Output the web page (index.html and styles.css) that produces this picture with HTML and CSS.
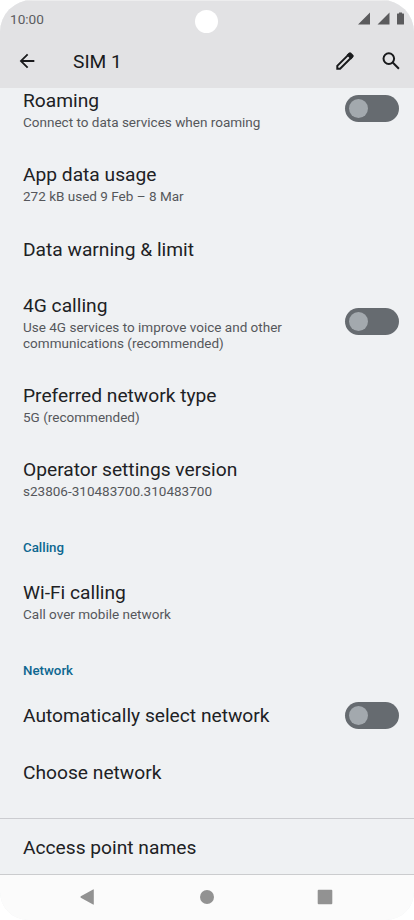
FILE: index.html
```html
<!DOCTYPE html>
<html lang="en">
<head>
<meta charset="utf-8">
<title>SIM 1</title>
<link rel="stylesheet" href="styles.css">
</head>
<body>
<div class="screen">
  <header class="top">
    <div class="status">
      <span class="clock">10:00</span>
      <svg class="signals" viewBox="0 0 48 14" width="48" height="14">
        <path d="M13 .5v12H1zM32.500.5v12h-12z"/>
        <path d="M40.500 1.500h1.500V.5h3v1h1.500q.5 0 .5.5v10q0 .5-.5.5h-6q-.5 0-.5-.5v-10q0-.5.500-.5z"/>
      </svg>
    </div>
    <div class="camera"></div>
    <div class="appbar">
      <svg class="back" viewBox="0 0 24 24" width="22" height="22"><path d="M20 11H7.830l5.590-5.590L12 4l-8 8 8 8 1.410-1.410L7.830 13H20v-2z"/></svg>
      <h1>SIM 1</h1>
      <svg class="edit" viewBox="0 0 20 20" width="20" height="20"><path class="line" d="M2.300 14.900v2.800h2.800L16.400 6.400l-2.800-2.800z"/><path d="M11.600 4l2.300-2.300q1.100-1.100 2.200 0l2.200 2.200q1.100 1.100 0 2.200L16 8.400z"/></svg>
      <svg class="search" viewBox="0 0 20 20" width="20" height="20"><circle class="line" cx="7.800" cy="7.600" r="5.300"/><path class="line" d="M11.700 11.500l6.200 6.200"/></svg>
    </div>
  </header>
  <main class="list">
    <div class="row first"><div><h2>Roaming</h2><p>Connect to data services when roaming</p></div><span class="switch"></span></div>
    <div class="row"><div><h2>App data usage</h2><p>272 kB used 9 Feb – 8 Mar</p></div></div>
    <div class="row"><div><h2>Data warning &amp; limit</h2></div></div>
    <div class="row"><div><h2>4G calling</h2><p>Use 4G services to improve voice and other<br>communications (recommended)</p></div><span class="switch"></span></div>
    <div class="row"><div><h2>Preferred network type</h2><p>5G (recommended)</p></div></div>
    <div class="row"><div><h2>Operator settings version</h2><p>s23806-310483700.310483700</p></div></div>
    <h3>Calling</h3>
    <div class="row"><div><h2>Wi-Fi calling</h2><p>Call over mobile network</p></div></div>
    <h3>Network</h3>
    <div class="row"><div><h2>Automatically select network</h2></div><span class="switch"></span></div>
    <div class="row"><div><h2>Choose network</h2></div></div>
    <div class="row last"><div><h2>Access point names</h2></div></div>
  </main>
  <nav class="nav">
    <svg viewBox="0 0 16 16" width="16" height="16"><path d="M13.800.7v14.600q0 .7-.7.300L.8 8.700Q0 8 .8 7.300L13.100.4q.7-.4.700.3z"/></svg>
    <svg viewBox="0 0 16 16" width="16" height="16"><circle cx="8" cy="8" r="7"/></svg>
    <svg viewBox="0 0 16 16" width="16" height="16"><rect x=".7" y=".7" width="14.600" height="14.600" rx="1"/></svg>
  </nav>
</div>
</body>
</html>
```
FILE: styles.css
```css
* { box-sizing: border-box; margin: 0; padding: 0; }
body { background: #fff; font-family: Roboto, sans-serif; }
svg { display: block; flex: none; }

.screen {
  position: relative;
  display: flex;
  flex-direction: column;
  width: 414px;
  height: 920px;
  overflow: hidden;
  border-radius: 32px 32px 28px 28px;
  background: #eff1f3;
}

.top { flex: none; height: 88px; background: #e2e2e4; border-top: 1px solid #ededee; }
.status { display: flex; justify-content: space-between; align-items: center; height: 36px; padding: 0 9px 1px 10px; }
.clock { font-size: 13.600px; line-height: 16px; color: #5b5c5f; }
.signals { fill: #5b5b5d; }
.camera { position: absolute; left: 195px; top: 10px; width: 23px; height: 23px; border-radius: 50%; background: #fff; }
.appbar { display: flex; align-items: center; height: 49px; padding: 0 13px 1px 16px; color: #191a1c; fill: currentColor; }
.appbar h1 { flex: 1; margin-left: 35px; padding-top: 1px; font-size: 19.200px; line-height: 24px; font-weight: 400; }
.search { margin-left: 26px; }
.line { fill: none; stroke: currentColor; stroke-width: 2; }

.list { flex: 1; min-height: 0; overflow: hidden; }
.row { display: flex; justify-content: space-between; align-items: center; padding: 16.250px 15px 16.250px 23px; }
.first { margin-top: -15.300px; }
.last { margin-top: 17.200px; border-top: 1px solid #cbccd0; }
h2 { font-size: 19.200px; line-height: 24px; font-weight: 400; color: #202124; white-space: nowrap; }
p { margin: 1.900px 0 .1px; font-size: 13.520px; line-height: 15.800px; color: #55575b; white-space: nowrap; }
h3 { height: 48.500px; padding: 24px 0 0 23px; font-size: 13.300px; line-height: 16px; font-weight: 500; color: #0d6790; }

.switch { flex: none; width: 54px; height: 27px; margin-top: -2.400px; padding: 4px; border-radius: 14px; background: #666b70; }
.switch::before { content: ""; display: block; width: 19px; height: 19px; border-radius: 50%; background: #a3a9ae; }

.nav {
  flex: none;
  display: flex;
  justify-content: space-between;
  align-items: center;
  height: 46px;
  padding: 0 81px 2px 80px;
  border-top: 1px solid #cbccce;
  background: #fbfbfb;
  fill: #929292;
}
```
